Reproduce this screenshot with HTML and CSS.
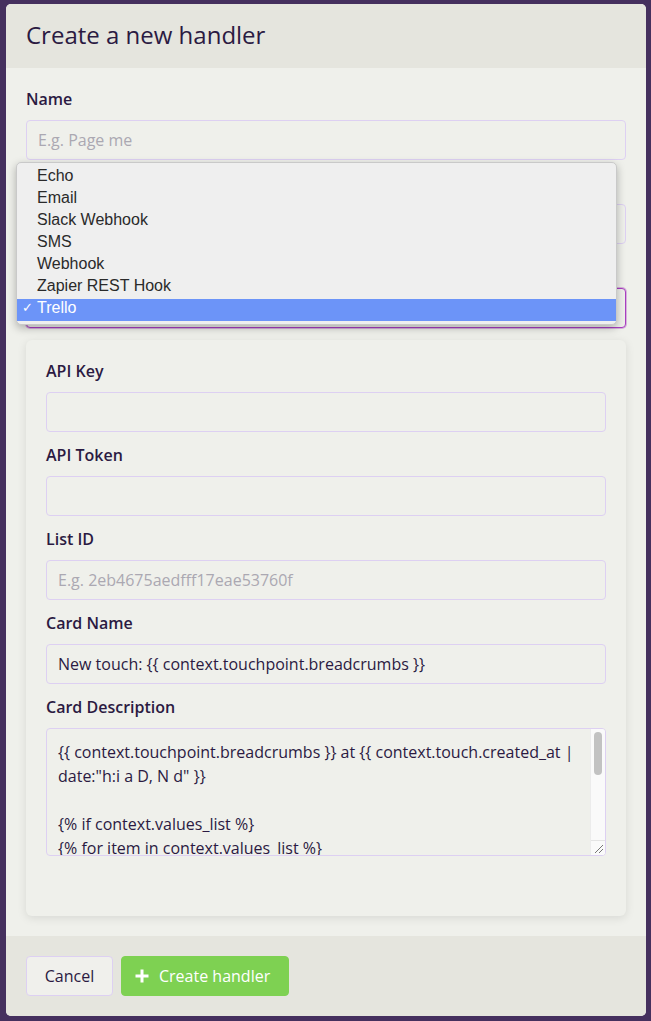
FILE: index.html
```html
<!DOCTYPE html>
<html>
<head>
<meta charset="utf-8">
<link rel="stylesheet" href="styles.css">
</head>
<body>
<div class="modal">
  <div class="modal-header">
    <h1 class="title">Create a new handler</h1>
  </div>
  <div class="modal-body">
    <div class="field">
      <label class="label">Name</label>
      <div class="input placeholder">E.g. Page me</div>
    </div>
    <div class="field">
      <label class="label">Description</label>
      <div class="input placeholder"></div>
    </div>
    <div class="field select-field">
      <label class="label">Type</label>
      <div class="input select-box">Trello</div>
      <ul class="dropdown">
        <li>Echo</li>
        <li>Email</li>
        <li>Slack Webhook</li>
        <li>SMS</li>
        <li>Webhook</li>
        <li>Zapier REST Hook</li>
        <li class="selected"><span class="check">✓</span>Trello</li>
      </ul>
    </div>
    <div class="panel">
      <div class="field">
        <label class="label">API Key</label>
        <div class="input"></div>
      </div>
      <div class="field">
        <label class="label">API Token</label>
        <div class="input"></div>
      </div>
      <div class="field">
        <label class="label">List ID</label>
        <div class="input placeholder">E.g. 2eb4675aedfff17eae53760f</div>
      </div>
      <div class="field">
        <label class="label">Card Name</label>
        <div class="input">New touch: {{ context.touchpoint.breadcrumbs }}</div>
      </div>
      <div class="field">
        <label class="label">Card Description</label>
        <div class="textarea">
          <div class="textarea-text">{{ context.touchpoint.breadcrumbs }} at {{ context.touch.created_at |
date:"h:i a D, N d" }}

{% if context.values_list %}
{% for item in context.values_list %}
- {{ item }}
{% endfor %}
{% endif %}</div>
          <div class="scrollbar"><div class="thumb"></div><div class="resizer"><svg width="14" height="14" viewBox="0 0 14 14"><path d="M4 12L12 4M8 12L12 8" stroke="#777" stroke-width="1"/></svg></div></div>
        </div>
      </div>
    </div>
  </div>
  <div class="modal-footer">
    <button class="btn btn-cancel">Cancel</button>
    <button class="btn btn-create"><svg class="plus" width="14" height="14" viewBox="0 0 14 14"><path d="M7 0.5v13M0.5 7h13" stroke="#fff" stroke-width="3"/></svg>Create handler</button>
  </div>
</div>
</body>
</html>
```
FILE: styles.css
```css
* { box-sizing: border-box; }
html, body { margin: 0; padding: 0; }
body {
  background: #45305e;
  font-family: "Open Sans", Lato, sans-serif;
  color: #2b1a42;
  padding: 4px 5px 5px 6px;
}
.modal {
  width: 640px;
  border-radius: 5px;
  overflow: hidden;
  background: #eff0eb;
}
.modal-header {
  background: #e5e5de;
  height: 64px;
  display: flex;
  align-items: center;
  padding: 0 20px 3px 20px;
}
.title {
  margin: 0;
  font-weight: 400;
  font-size: 24px;
  color: #2b1a42;
}
.modal-body {
  padding: 20px;
}
.field {
  margin-bottom: 12px;
}
.label {
  display: block;
  height: 22px;
  line-height: 22px;
  font-size: 16px;
  font-weight: 600;
  margin-bottom: 10px;
  color: #2b1a42;
}
.input {
  height: 40px;
  border: 1px solid #ddd0f2;
  border-radius: 4px;
  padding: 0 11px;
  line-height: 38px;
  font-size: 16px;
  color: #2b1a42;
  background: #eff0eb;
  white-space: nowrap;
}
.placeholder { color: #aba8b2; }
.select-field { position: relative; }
.select-box {
  border: 1px solid #a93fc1;
  box-shadow: 0 0 0 1px rgba(169, 63, 193, 0.35);
}
.dropdown {
  position: absolute;
  left: -10px;
  top: -94px;
  width: 601px;
  margin: 0;
  padding: 4px 0 3px 0;
  list-style: none;
  background: #efefef;
  border: 1px solid #c9c9c9;
  border-radius: 5px;
  box-shadow: 0 3px 8px rgba(0, 0, 0, 0.28);
  font-family: "Liberation Sans", Arial, sans-serif;
  font-size: 16px;
  color: #2a2a2a;
}
.dropdown li {
  height: 22px;
  line-height: 18px;
  padding-left: 20px;
  position: relative;
}
.dropdown li.selected {
  background: #6c94f8;
  color: #fff;
}
.check {
  position: absolute;
  left: 5px;
  font-size: 13px;
}
.panel {
  background: #eff0eb;
  border-radius: 6px;
  box-shadow: 0 2px 10px rgba(0, 0, 0, 0.1);
  padding: 20px 20px 60px 20px;
}
.panel .field:last-child { margin-bottom: 0; }
.textarea {
  position: relative;
  height: 128px;
  border: 1px solid #ddd0f2;
  border-radius: 4px;
  background: #eff0eb;
  overflow: hidden;
}
.textarea-text {
  padding: 11px 26px 0 11px;
  font-size: 16px;
  line-height: 24px;
  white-space: pre-wrap;
  color: #2b1a42;
}
.scrollbar {
  position: absolute;
  top: 0;
  right: 0;
  bottom: 0;
  width: 15px;
  background: #fafafa;
  border-left: 1px solid #ececec;
}
.thumb {
  margin: 3px 3px 0 3px;
  height: 43px;
  background: #c2c2c2;
  border-radius: 4px;
}
.resizer {
  position: absolute;
  left: 0;
  right: 0;
  bottom: 0;
  height: 15px;
  border-top: 1px solid #e4e4e4;
  background: #fafafa;
}
.resizer svg { display: block; }
.modal-footer {
  background: #e5e5de;
  padding: 20px;
  display: flex;
  gap: 8px;
}
.btn {
  height: 40px;
  border-radius: 4px;
  font-family: "Open Sans", Lato, sans-serif;
  font-size: 16px;
  padding: 0 16px;
  display: flex;
  align-items: center;
  cursor: pointer;
}
.btn-cancel {
  background: #f0f0ec;
  border: 1px solid #ddd0f2;
  color: #2b1a42;
  width: 87px;
  justify-content: center;
}
.btn-create {
  background: #7ed152;
  border: 1px solid #7ed152;
  color: #fff;
  width: 168px;
  padding-left: 13px;
}
.plus { margin-right: 10px; }
```
